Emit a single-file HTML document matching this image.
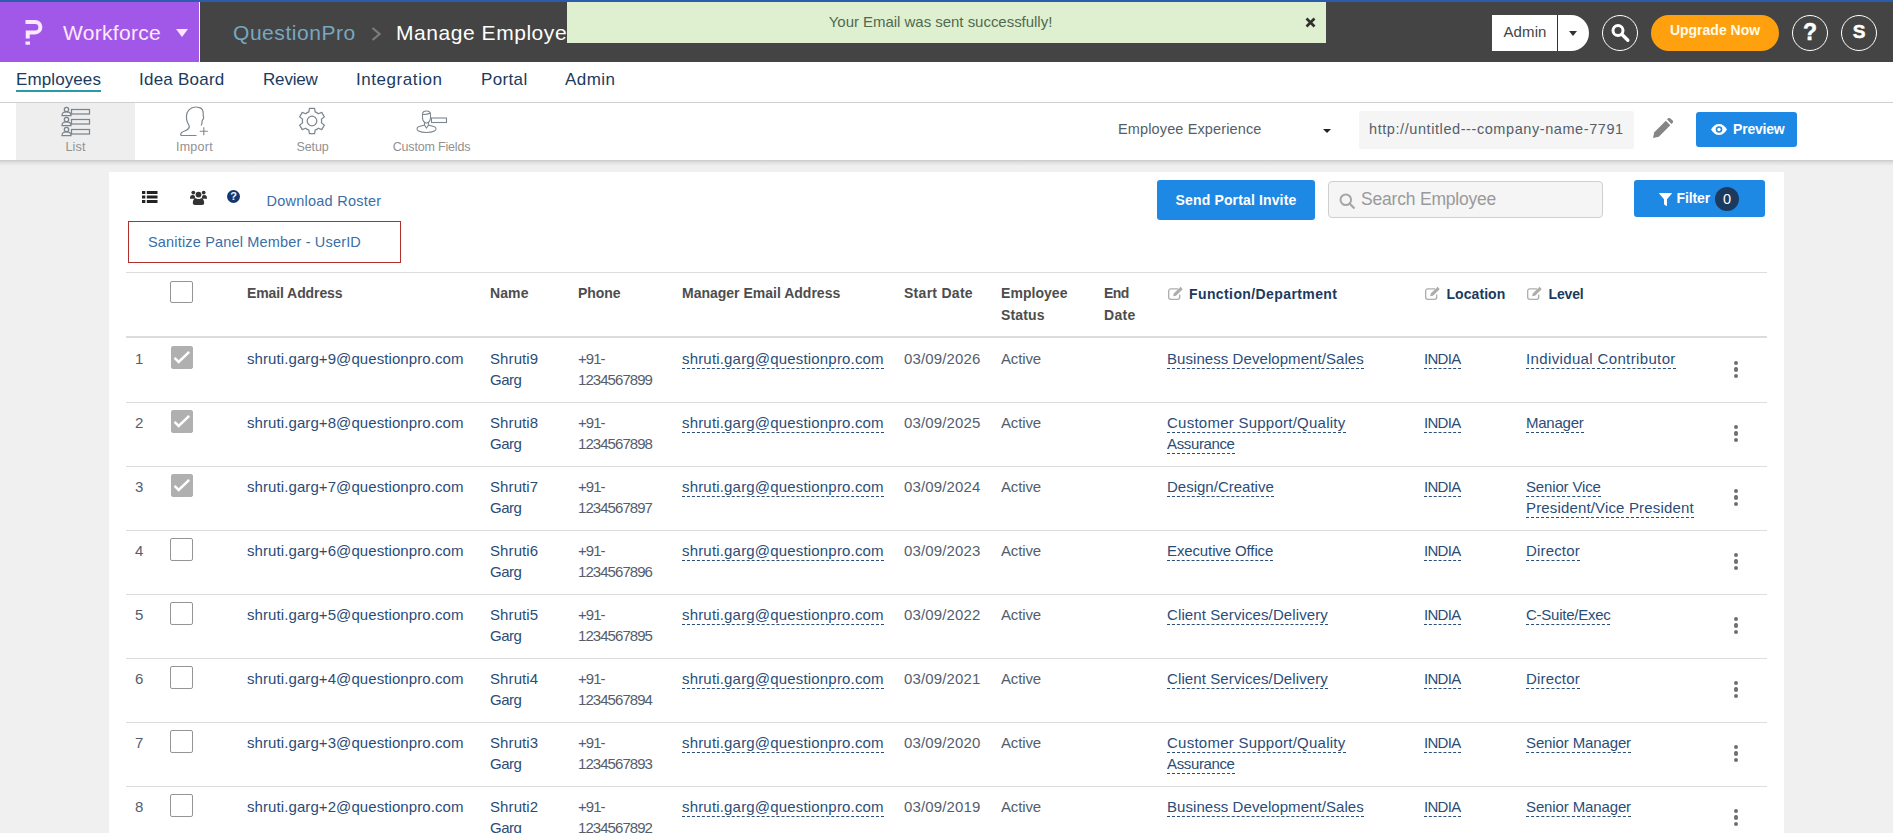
<!DOCTYPE html>
<html lang="en">
<head>
<meta charset="utf-8">
<title>Manage Employees</title>
<style>
*{box-sizing:border-box;}
html,body{margin:0;padding:0;}
body{width:1893px;height:833px;overflow:hidden;background:#f0f0f0;font-family:"Liberation Sans",sans-serif;color:#545e6b;font-size:14px;position:relative;}
a{text-decoration:none;color:inherit;}
svg{display:block;}
/* header */
#hdr{position:absolute;left:0;top:0;width:1893px;height:62px;background:#444444;border-top:2px solid #2c5cad;}
#brand{position:absolute;left:0;top:0;width:199px;height:60px;background:#a158e8;}
#brand .sep{position:absolute;left:199px;top:0;width:1px;height:60px;background:#fff;}
#brand .logo{position:absolute;left:20px;top:14px;width:30px;height:34px;}
#brand .wf{position:absolute;left:63px;top:18px;font-size:21px;letter-spacing:.3px;color:#fde8ff;line-height:26px;white-space:nowrap;}
#brand .car{position:absolute;left:176px;top:27px;width:0;height:0;border-left:6.5px solid transparent;border-right:6.5px solid transparent;border-top:8px solid #fde8ff;}
#crumb{position:absolute;left:233px;top:18px;font-size:21px;letter-spacing:.55px;line-height:26px;white-space:nowrap;color:#fff;}
#crumb .qp{color:#76a8c2;}
#crumb .gt{position:absolute;left:137.500px;top:6.500px;width:10px;height:14px;}
#crumb .me{position:absolute;left:163px;top:0;}
#toast{position:absolute;left:567px;top:0;width:759px;height:41px;background:#dff0d0;color:#506a50;font-size:15px;text-align:center;line-height:39px;letter-spacing:-.03px;padding-right:12px;}
#toast svg{position:absolute;left:738px;top:15px;width:11px;height:11px;}
#adm{position:absolute;left:1492px;top:13px;width:97px;height:36px;background:#fff;border-radius:0 18px 18px 0;color:#444;font-size:15px;line-height:34px;padding-left:11.5px;letter-spacing:.1px;}
#adm .dv{position:absolute;left:65px;top:0;width:1px;height:36px;background:#333;}
#adm .car{position:absolute;left:77px;top:16px;width:0;height:0;border-left:4.6px solid transparent;border-right:4.6px solid transparent;border-top:5px solid #333;}
.circ{position:absolute;top:13px;width:36px;height:36px;border:1.5px solid #fff;border-radius:18px;color:#fff;font-weight:bold;text-align:center;-webkit-text-stroke:.5px #fff;}
#upg{position:absolute;left:1651px;top:13px;width:128px;height:36px;border-radius:18px;background:#ffa00f;color:#fffbe8;font-weight:bold;font-size:14px;line-height:31px;text-align:center;white-space:nowrap;}
/* nav */
#nav{position:absolute;left:0;top:62px;width:1893px;height:41px;background:#fff;border-bottom:1px solid #cfcfcf;}
#nav a{position:absolute;top:8px;font-size:17px;line-height:20px;color:#1b3a5e;white-space:nowrap;}
#nav a.on{border-bottom:2px solid #2b9aa8;}
/* toolbar */
#tb{position:absolute;left:0;top:103px;width:1893px;height:57px;background:#fff;}
#tbsh{position:absolute;left:0;top:160px;width:1893px;height:6px;background:linear-gradient(#c9c9c9,#dddddd 35%,#f0f0f0);}
#tb .tab{position:absolute;top:0;height:57px;width:119px;color:#919191;font-size:12.5px;}
#tb .tab.on{background:#eeeeee;}
#tb .tab span{position:absolute;left:0;right:0;top:37.3px;line-height:15px;text-align:center;white-space:nowrap;}
#tb .tab svg{position:absolute;}
#exp{position:absolute;left:1118px;top:17px;font-size:14.5px;letter-spacing:.13px;line-height:18px;color:#545e6b;white-space:nowrap;}
#expc{position:absolute;left:1323px;top:26px;width:0;height:0;border-left:4.5px solid transparent;border-right:4.5px solid transparent;border-top:4.6px solid #222;}
#url{position:absolute;left:1359px;top:8px;width:275px;height:38px;background:#f5f5f5;border-radius:2px;font-size:14.5px;letter-spacing:.576px;line-height:36px;padding-left:10px;color:#545e6b;white-space:nowrap;overflow:hidden;}
#pen{position:absolute;left:1652px;top:15px;width:21px;height:21px;}
.btn{position:absolute;background:#1e88e5;color:#fff;border-radius:3px;font-weight:bold;white-space:nowrap;}
#prv{left:1696px;top:9px;width:101px;height:35px;line-height:34px;font-size:14px;letter-spacing:-.2px;padding-left:37px;}
#prv svg{position:absolute;left:15px;top:11.5px;width:16px;height:11px;}
/* card */
#card{position:absolute;left:109px;top:172px;width:1675px;height:700px;background:#fff;}
#card .ico{position:absolute;}
#dl{position:absolute;left:157.5px;top:20px;font-size:14.5px;letter-spacing:.24px;line-height:18px;color:#3b6ea8;white-space:nowrap;}
#san{position:absolute;left:19px;top:49px;width:273px;height:42px;border:1px solid #b03030;color:#3b6ea8;font-size:14.5px;letter-spacing:.17px;line-height:41px;padding-left:19px;white-space:nowrap;}
#spi{left:1048px;top:8px;width:158px;height:40px;line-height:40px;font-size:14px;letter-spacing:.14px;text-align:center;}
#srch{position:absolute;left:1219px;top:9px;width:275px;height:37px;background:#f5f5f5;border:1px solid #cfcfcf;border-radius:4px;color:#9a9a9a;font-size:17.5px;letter-spacing:-.2px;line-height:34px;padding-left:32px;white-space:nowrap;}
#srch svg{position:absolute;left:10px;top:11px;width:16px;height:16px;}
#flt{left:1525px;top:8px;width:131px;height:37px;line-height:37px;font-size:14px;letter-spacing:-.12px;padding-left:42.5px;}
#flt svg{position:absolute;left:25px;top:13px;width:13px;height:13px;}
#flt .n{position:absolute;left:81px;top:7px;width:24px;height:24px;border-radius:12px;background:#1b3a5e;line-height:24px;font-weight:normal;text-align:center;letter-spacing:0;font-size:14.5px;}
/* table */
#tbl{position:absolute;left:17px;top:100px;width:1641px;border-top:1px solid #dddddd;}
#th{position:relative;height:65px;border-bottom:2px solid #dcdcdc;font-weight:bold;color:#4d4d4d;font-size:14px;line-height:21.5px;}
#th .h{position:absolute;top:10px;white-space:nowrap;}
#th .h.b{color:#1b3a5e;top:11px;}
#th svg{position:absolute;top:14px;width:15px;height:13px;}
.row{position:relative;height:64px;font-size:15px;line-height:21px;color:#545e6b;}
.row:after{content:"";position:absolute;left:0;right:0;bottom:-1px;height:1px;background:#dddddd;}
.row .c{position:absolute;top:10px;white-space:nowrap;}
.row a{color:#2a4d78;}
.row a.d{border-bottom:1px dashed #2a4d78;padding-bottom:1px;}
.cb{position:absolute;left:44px;top:8px;width:23px;height:23px;border:1px solid #959595;border-radius:2px;background:#fff;}
.cb.on{background:#b0b0b0;border-color:#b0b0b0;left:45px;width:22px;}
.cb svg{position:absolute;left:-1px;top:-1px;width:22px;height:23px;}
.num{left:9px;}.em{left:121px;}.nm{left:364px;}.ph{left:452px;}.me{left:556px;}.sd{left:778px;}.st{left:875px;}.fn{left:1041px;}.lo{left:1298px;}.lv{left:1400px;}
.kb{position:absolute;left:1608px;top:23px;width:5px;}
.kb i{display:block;width:4.4px;height:4.4px;border-radius:2.2px;background:#707070;margin-bottom:1.9px;}
</style>
</head>
<body>
<div id="hdr">
  <div id="brand">
    <svg class="logo" viewBox="20 16 30 34"><path d="M25.5 22H35.2A5.2 5.2 0 0 1 35.2 32.4H27.75V38.6" fill="none" stroke="#fde8ff" stroke-width="4"/><rect x="25.5" y="41.5" width="4.5" height="3.2" fill="#fde8ff"/></svg>
    <div class="wf">Workforce</div>
    <div class="car"></div>
    <div class="sep"></div>
  </div>
  <div id="crumb"><span class="qp">QuestionPro</span><svg class="gt" viewBox="0 0 10 14"><path d="M1.500 1l7 6-7 6" fill="none" stroke="#7c7c7c" stroke-width="2.200"/></svg><span class="me">Manage Employees</span></div>
  <div id="toast">Your Email was sent successfully!<svg viewBox="0 0 11 11"><path d="M1.5 1.5l8 8M9.5 1.5l-8 8" stroke="#2f2f2f" stroke-width="2.6"/></svg></div>
  <div id="adm">Admin<div class="dv"></div><div class="car"></div></div>
  <div class="circ" style="left:1602px"><svg viewBox="0 0 36 36" style="position:absolute;left:-1.5px;top:-1.5px;width:36px;height:36px"><circle cx="16" cy="15.5" r="5" fill="none" stroke="#fff" stroke-width="3"/><path d="M19.8 19.3l6 6" stroke="#fff" stroke-width="3.4" stroke-linecap="round"/></svg></div>
  <div id="upg">Upgrade Now</div>
  <div class="circ" style="left:1792px;font-size:23px;line-height:32px">?</div>
  <div class="circ" style="left:1841px;font-size:19px;line-height:32px">S</div>
</div>
<div id="nav">
  <a class="on" style="left:16px;letter-spacing:.1px">Employees</a>
  <a style="left:139px;letter-spacing:.23px">Idea Board</a>
  <a style="left:263px;letter-spacing:-.17px">Review</a>
  <a style="left:356px;letter-spacing:.56px">Integration</a>
  <a style="left:481px;letter-spacing:.36px">Portal</a>
  <a style="left:565px;letter-spacing:.42px">Admin</a>
</div>
<div id="tb">
  <div class="tab on" style="left:16px">
    <svg style="left:44px;top:3px;width:31px;height:31px" viewBox="0 0 31 31" fill="none" stroke="#7b848d" stroke-width="1.25"><g id="lr"><circle cx="6.5" cy="3.5" r="2.2"/><path d="M2 9.5c0-3 2-3.6 4.500-3.600s4.500.6 4.500 3.600z"/><rect x="11.500" y="3.500" width="18" height="4.500"/></g><use href="#lr" y="10"/><use href="#lr" y="20"/></svg>
    <span style="letter-spacing:.14px">List</span></div>
  <div class="tab" style="left:135px">
    <svg style="left:44px;top:3px;width:30px;height:31px" viewBox="0 0 30 31" fill="none" stroke="#7e868e" stroke-width="1.2"><path d="M17.500 29.500H2.500C1.300 29.500 1.500 27.200 3 26.200C5.500 24.600 9.500 24.700 10.300 21C10.600 19.500 8.700 17.800 8 15C7 11 7.300 6.500 10 3.800C12.500 1.200 17 .600 20.500 1.600C23.500 2.500 24.300 5.500 24.200 8C24.100 10 24.900 11 24.500 12.500C24.200 13.500 23.200 13.800 23.100 14.800C23 16.500 23.500 17.500 22 19.500"/><path d="M24.800 21.200v8M20.800 25.200h8" stroke-width="1.100"/></svg>
    <span style="letter-spacing:.3px">Import</span></div>
  <div class="tab" style="left:253px">
    <svg style="left:45px;top:4px;width:28px;height:28px" viewBox="-14 -14 28 28" fill="none" stroke="#7e868e" stroke-width="1.25"><circle r="4.800"/><path d="M-3.11 -9.08L-2.58 -12.74L2.58 -12.74L3.11 -9.08A9.6 9.6 0 0 1 6.31 -7.24L6.31 -7.24L9.74 -8.61L12.33 -4.13L9.42 -1.85A9.6 9.6 0 0 1 9.42 1.85L9.42 1.85L12.33 4.13L9.74 8.61L6.31 7.24A9.6 9.6 0 0 1 3.11 9.08L3.11 9.08L2.58 12.74L-2.58 12.74L-3.11 9.08A9.6 9.6 0 0 1 -6.31 7.24L-6.31 7.24L-9.74 8.61L-12.33 4.13L-9.42 1.85A9.6 9.6 0 0 1 -9.42 -1.85L-9.42 -1.85L-12.33 -4.13L-9.74 -8.61L-6.31 -7.24A9.6 9.6 0 0 1 -3.11 -9.08Z" stroke-linejoin="round"/></svg>
    <span style="letter-spacing:-.09px">Setup</span></div>
  <div class="tab" style="left:372px">
    <svg style="left:43px;top:6px;width:33px;height:25px" viewBox="0 0 33 25" fill="none" stroke="#7e868e" stroke-width="1.1"><path d="M7.500 5.500c0-2.800 1.500-3.500 4-3.500s4 .7 4 3.500v3c0 3-1.800 5.500-4 5.500s-4-2.500-4-5.500z"/><path d="M7.500 5.500c2.500.2 5.500-.2 8-1.500"/><path d="M9.500 13.500v2.500l-6 1.800c-2 .8-2 3.200 0 4.200 2.500 1.200 5.500 1.500 8 1.500s5.500-.3 8-1.500c2-1 2-3.400 0-4.200l-6-1.800v-2.500"/><path d="M9.500 16l2 3 2-3"/><rect x="16.500" y="9" width="15" height="4.500"/></svg>
    <span style="letter-spacing:-.18px">Custom Fields</span></div>
  <div id="exp">Employee Experience</div>
  <div id="expc"></div>
  <div id="url">http://untitled---company-name-7791</div>
  <svg id="pen" viewBox="0 0 21 21"><path d="M1 20l1.300-5.800L13.800 2.700l4.500 4.500L6.800 18.700z" fill="#858585"/><path d="M15 1.500l1.200-1.200c.8-.6 1.500-.5 2.200.1l2.200 2.200c.6.700.7 1.400.1 2.200L19.500 6z" fill="#858585"/></svg>
  <div class="btn" id="prv"><svg viewBox="0 0 16 11"><path d="M0 5.500C2 2 4.800 0 8 0s6 2 8 5.500C14 9 11.200 11 8 11S2 9 0 5.500z" fill="#fff"/><circle cx="8" cy="5.500" r="3.300" fill="#1e88e5"/><circle cx="8" cy="5.500" r="1.700" fill="#fff"/></svg>Preview</div>
</div>
<div id="tbsh"></div>
<div id="card">
  <svg class="ico" style="left:33px;top:19px;width:16px;height:12px" viewBox="0 0 16 12" fill="#222"><rect x="0" y="0" width="3.300" height="3"/><rect x="4.800" y="0" width="10.700" height="3"/><rect x="0" y="4.500" width="3.300" height="3"/><rect x="4.800" y="4.500" width="10.700" height="3"/><rect x="0" y="9" width="3.300" height="3"/><rect x="4.800" y="9" width="10.700" height="3"/></svg>
  <svg class="ico" style="left:80.500px;top:18px;width:17px;height:15px" viewBox="0 0 17 15" fill="#333"><circle cx="3.300" cy="2.600" r="1.900"/><circle cx="13.700" cy="2.600" r="1.900"/><circle cx="8.500" cy="4.600" r="2.900"/><path d="M0 8.300c0-2.200 1-3.300 2.600-3.300.8 0 1.700.4 2.300 1-.2 1 .2 2 .8 2.700H0z"/><path d="M17 8.300c0-2.200-1-3.300-2.600-3.300-.8 0-1.700.4-2.300 1 .2 1-.2 2-.8 2.700H17z"/><path d="M2.800 13c0-3.300 1.400-4.800 3.200-4.800.7.600 1.600.9 2.500.9s1.800-.3 2.500-.9c1.800 0 3.200 1.500 3.200 4.800 0 1.300-.9 2-2.100 2H4.900c-1.200 0-2.100-.7-2.100-2z"/></svg>
  <div class="ico" style="left:118.200px;top:18.300px;width:13px;height:13px;border-radius:7px;background:#16366f;color:#e8f6ff;font-weight:bold;font-size:11px;line-height:13px;text-align:center">?</div>
  <a id="dl">Download Roster</a>
  <div id="san">Sanitize Panel Member - UserID</div>
  <div class="btn" id="spi">Send Portal Invite</div>
  <div id="srch"><svg viewBox="0 0 16 16"><circle cx="6.800" cy="6.800" r="5.300" fill="none" stroke="#a6a6a6" stroke-width="2"/><path d="M10.800 10.800l4 4" stroke="#a6a6a6" stroke-width="2.300" stroke-linecap="round"/></svg>Search Employee</div>
  <div class="btn" id="flt"><svg viewBox="0 0 13 13"><path d="M.3 0h12.400c.3 0 .4.300.2.600L8 6.200v6.300c0 .4-.3.600-.6.400L5.200 11.400c-.2-.1-.2-.3-.2-.5V6.200L.1.600C-.1.300 0 0 .3 0z" fill="#fff"/></svg>Filter<span class="n">0</span></div>
  <div id="tbl">
  <div id="th">
    <div class="cb" style="left:44px;top:8px;width:23px;height:22px"></div>
    <div class="h" style="left:121px;letter-spacing:-.1px">Email Address</div>
    <div class="h" style="left:364px;letter-spacing:.11px">Name</div>
    <div class="h" style="left:452px;letter-spacing:-.08px">Phone</div>
    <div class="h" style="left:556px">Manager Email Address</div>
    <div class="h" style="left:778px;letter-spacing:.28px">Start Date</div>
    <div class="h" style="left:875px;letter-spacing:.05px">Employee<br><span style="letter-spacing:.15px">Status</span></div>
    <div class="h" style="left:978px"><span style="letter-spacing:-.55px">End</span><br><span style="letter-spacing:.28px">Date</span></div>
    <svg style="left:1042px" viewBox="0 0 15 13"><use href="#edit"/></svg>
    <div class="h b" style="left:1063px;letter-spacing:.4px">Function/Department</div>
    <svg style="left:1299px" viewBox="0 0 15 13"><use href="#edit"/></svg>
    <div class="h b" style="left:1320.500px;letter-spacing:.06px">Location</div>
    <svg style="left:1401px" viewBox="0 0 15 13"><use href="#edit"/></svg>
    <div class="h b" style="left:1422.500px;letter-spacing:-.16px">Level</div>
  </div>
  <div class="row">
    <div class="c num">1</div>
    <div class="cb on"><svg viewBox="0 0 22 23"><path d="M3.6 11.8l4.1 4.2 10.5-10.2" fill="none" stroke="#fff" stroke-width="2.5"/></svg></div>
    <div class="c em"><a style="letter-spacing:0.086px">shruti.garg+9@questionpro.com</a></div>
    <div class="c nm"><a style="letter-spacing:0.096px">Shruti9</a><br><a style="letter-spacing:-0.465px">Garg</a></div>
    <div class="c ph"><span style="letter-spacing:-0.963px">+91-</span><br><span style="letter-spacing:-0.944px">1234567899</span></div>
    <div class="c me"><a class="d" style="letter-spacing:0.178px">shruti.garg@questionpro.com</a></div>
    <div class="c sd"><span style="letter-spacing:0.152px">03/09/2026</span></div>
    <div class="c st"><span style="letter-spacing:-0.143px">Active</span></div>
    <div class="c fn"><a class="d" style="letter-spacing:0.065px">Business Development/Sales</a></div>
    <div class="c lo"><a class="d" style="letter-spacing:-0.703px">INDIA</a></div>
    <div class="c lv"><a class="d" style="letter-spacing:0.361px">Individual Contributor</a></div>
    <div class="kb"><i></i><i></i><i></i></div>
  </div>
  <div class="row">
    <div class="c num">2</div>
    <div class="cb on"><svg viewBox="0 0 22 23"><path d="M3.6 11.8l4.1 4.2 10.5-10.2" fill="none" stroke="#fff" stroke-width="2.5"/></svg></div>
    <div class="c em"><a style="letter-spacing:0.086px">shruti.garg+8@questionpro.com</a></div>
    <div class="c nm"><a style="letter-spacing:0.096px">Shruti8</a><br><a style="letter-spacing:-0.465px">Garg</a></div>
    <div class="c ph"><span style="letter-spacing:-0.963px">+91-</span><br><span style="letter-spacing:-0.944px">1234567898</span></div>
    <div class="c me"><a class="d" style="letter-spacing:0.178px">shruti.garg@questionpro.com</a></div>
    <div class="c sd"><span style="letter-spacing:0.152px">03/09/2025</span></div>
    <div class="c st"><span style="letter-spacing:-0.143px">Active</span></div>
    <div class="c fn"><a class="d" style="letter-spacing:0.247px">Customer Support/Quality</a><br><a class="d" style="letter-spacing:-0.364px">Assurance</a></div>
    <div class="c lo"><a class="d" style="letter-spacing:-0.703px">INDIA</a></div>
    <div class="c lv"><a class="d" style="letter-spacing:-0.243px">Manager</a></div>
    <div class="kb"><i></i><i></i><i></i></div>
  </div>
  <div class="row">
    <div class="c num">3</div>
    <div class="cb on"><svg viewBox="0 0 22 23"><path d="M3.6 11.8l4.1 4.2 10.5-10.2" fill="none" stroke="#fff" stroke-width="2.5"/></svg></div>
    <div class="c em"><a style="letter-spacing:0.086px">shruti.garg+7@questionpro.com</a></div>
    <div class="c nm"><a style="letter-spacing:0.096px">Shruti7</a><br><a style="letter-spacing:-0.465px">Garg</a></div>
    <div class="c ph"><span style="letter-spacing:-0.963px">+91-</span><br><span style="letter-spacing:-0.944px">1234567897</span></div>
    <div class="c me"><a class="d" style="letter-spacing:0.178px">shruti.garg@questionpro.com</a></div>
    <div class="c sd"><span style="letter-spacing:0.152px">03/09/2024</span></div>
    <div class="c st"><span style="letter-spacing:-0.143px">Active</span></div>
    <div class="c fn"><a class="d" style="letter-spacing:0.005px">Design/Creative</a></div>
    <div class="c lo"><a class="d" style="letter-spacing:-0.703px">INDIA</a></div>
    <div class="c lv"><a class="d" style="letter-spacing:-0.158px">Senior Vice</a><br><a class="d" style="letter-spacing:0.155px">President/Vice President</a></div>
    <div class="kb"><i></i><i></i><i></i></div>
  </div>
  <div class="row">
    <div class="c num">4</div>
    <div class="cb"></div>
    <div class="c em"><a style="letter-spacing:0.086px">shruti.garg+6@questionpro.com</a></div>
    <div class="c nm"><a style="letter-spacing:0.096px">Shruti6</a><br><a style="letter-spacing:-0.465px">Garg</a></div>
    <div class="c ph"><span style="letter-spacing:-0.963px">+91-</span><br><span style="letter-spacing:-0.944px">1234567896</span></div>
    <div class="c me"><a class="d" style="letter-spacing:0.178px">shruti.garg@questionpro.com</a></div>
    <div class="c sd"><span style="letter-spacing:0.152px">03/09/2023</span></div>
    <div class="c st"><span style="letter-spacing:-0.143px">Active</span></div>
    <div class="c fn"><a class="d" style="letter-spacing:-0.119px">Executive Office</a></div>
    <div class="c lo"><a class="d" style="letter-spacing:-0.703px">INDIA</a></div>
    <div class="c lv"><a class="d" style="letter-spacing:0.161px">Director</a></div>
    <div class="kb"><i></i><i></i><i></i></div>
  </div>
  <div class="row">
    <div class="c num">5</div>
    <div class="cb"></div>
    <div class="c em"><a style="letter-spacing:0.086px">shruti.garg+5@questionpro.com</a></div>
    <div class="c nm"><a style="letter-spacing:0.096px">Shruti5</a><br><a style="letter-spacing:-0.465px">Garg</a></div>
    <div class="c ph"><span style="letter-spacing:-0.963px">+91-</span><br><span style="letter-spacing:-0.944px">1234567895</span></div>
    <div class="c me"><a class="d" style="letter-spacing:0.178px">shruti.garg@questionpro.com</a></div>
    <div class="c sd"><span style="letter-spacing:0.152px">03/09/2022</span></div>
    <div class="c st"><span style="letter-spacing:-0.143px">Active</span></div>
    <div class="c fn"><a class="d" style="letter-spacing:0.105px">Client Services/Delivery</a></div>
    <div class="c lo"><a class="d" style="letter-spacing:-0.703px">INDIA</a></div>
    <div class="c lv"><a class="d" style="letter-spacing:-0.254px">C-Suite/Exec</a></div>
    <div class="kb"><i></i><i></i><i></i></div>
  </div>
  <div class="row">
    <div class="c num">6</div>
    <div class="cb"></div>
    <div class="c em"><a style="letter-spacing:0.086px">shruti.garg+4@questionpro.com</a></div>
    <div class="c nm"><a style="letter-spacing:0.096px">Shruti4</a><br><a style="letter-spacing:-0.465px">Garg</a></div>
    <div class="c ph"><span style="letter-spacing:-0.963px">+91-</span><br><span style="letter-spacing:-0.944px">1234567894</span></div>
    <div class="c me"><a class="d" style="letter-spacing:0.178px">shruti.garg@questionpro.com</a></div>
    <div class="c sd"><span style="letter-spacing:0.152px">03/09/2021</span></div>
    <div class="c st"><span style="letter-spacing:-0.143px">Active</span></div>
    <div class="c fn"><a class="d" style="letter-spacing:0.105px">Client Services/Delivery</a></div>
    <div class="c lo"><a class="d" style="letter-spacing:-0.703px">INDIA</a></div>
    <div class="c lv"><a class="d" style="letter-spacing:0.161px">Director</a></div>
    <div class="kb"><i></i><i></i><i></i></div>
  </div>
  <div class="row">
    <div class="c num">7</div>
    <div class="cb"></div>
    <div class="c em"><a style="letter-spacing:0.086px">shruti.garg+3@questionpro.com</a></div>
    <div class="c nm"><a style="letter-spacing:0.096px">Shruti3</a><br><a style="letter-spacing:-0.465px">Garg</a></div>
    <div class="c ph"><span style="letter-spacing:-0.963px">+91-</span><br><span style="letter-spacing:-0.944px">1234567893</span></div>
    <div class="c me"><a class="d" style="letter-spacing:0.178px">shruti.garg@questionpro.com</a></div>
    <div class="c sd"><span style="letter-spacing:0.152px">03/09/2020</span></div>
    <div class="c st"><span style="letter-spacing:-0.143px">Active</span></div>
    <div class="c fn"><a class="d" style="letter-spacing:0.247px">Customer Support/Quality</a><br><a class="d" style="letter-spacing:-0.364px">Assurance</a></div>
    <div class="c lo"><a class="d" style="letter-spacing:-0.703px">INDIA</a></div>
    <div class="c lv"><a class="d" style="letter-spacing:-0.124px">Senior Manager</a></div>
    <div class="kb"><i></i><i></i><i></i></div>
  </div>
  <div class="row">
    <div class="c num">8</div>
    <div class="cb"></div>
    <div class="c em"><a style="letter-spacing:0.086px">shruti.garg+2@questionpro.com</a></div>
    <div class="c nm"><a style="letter-spacing:0.096px">Shruti2</a><br><a style="letter-spacing:-0.465px">Garg</a></div>
    <div class="c ph"><span style="letter-spacing:-0.963px">+91-</span><br><span style="letter-spacing:-0.944px">1234567892</span></div>
    <div class="c me"><a class="d" style="letter-spacing:0.178px">shruti.garg@questionpro.com</a></div>
    <div class="c sd"><span style="letter-spacing:0.152px">03/09/2019</span></div>
    <div class="c st"><span style="letter-spacing:-0.143px">Active</span></div>
    <div class="c fn"><a class="d" style="letter-spacing:0.065px">Business Development/Sales</a></div>
    <div class="c lo"><a class="d" style="letter-spacing:-0.703px">INDIA</a></div>
    <div class="c lv"><a class="d" style="letter-spacing:-0.124px">Senior Manager</a></div>
    <div class="kb"><i></i><i></i><i></i></div>
  </div>
  </div>
</div>
<svg width="0" height="0" style="position:absolute"><defs><g id="edit"><path d="M10 1.800H2.800C1.600 1.800.7 2.700.7 3.900v6.300c0 1.200.9 2.100 2.100 2.100h6.800c1.200 0 2.100-.9 2.100-2.100V7.500" fill="none" stroke="#adadad" stroke-width="1.300"/><path d="M5.200 9.300l.5-2.700L11.900.4c.4-.4.900-.4 1.300 0l1 1c.4.400.4.900 0 1.300L8 8.800z" fill="#adadad"/></g></defs></svg>
</body>
</html>
